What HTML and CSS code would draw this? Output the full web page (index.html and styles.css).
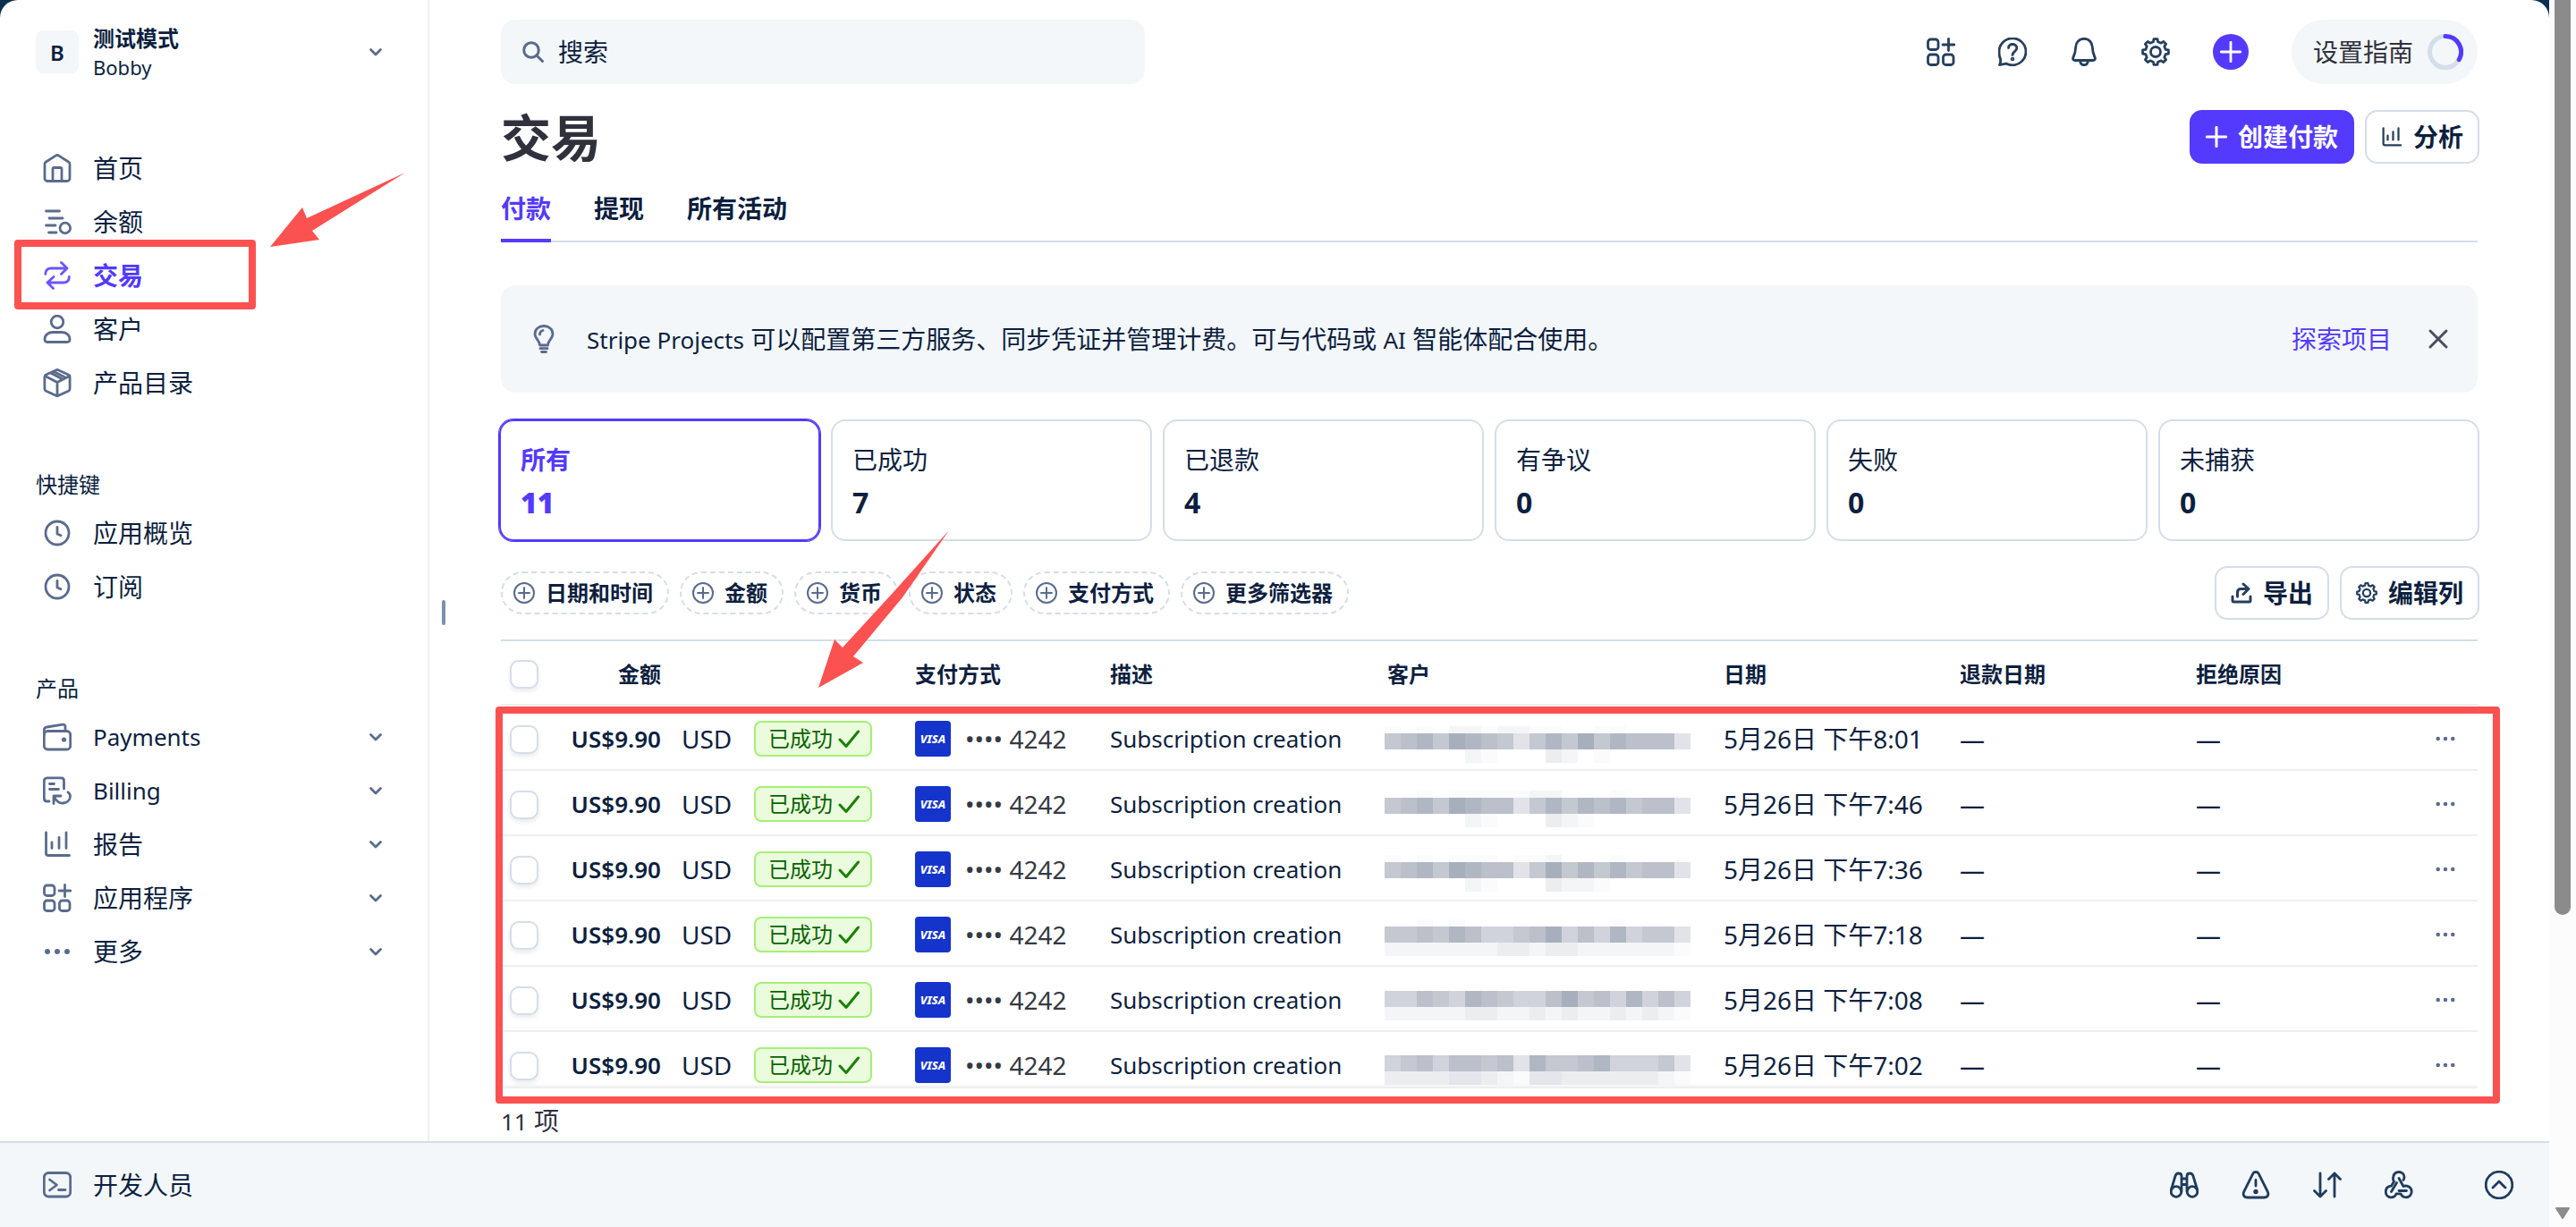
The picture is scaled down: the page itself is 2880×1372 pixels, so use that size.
FILE: index.html
```html
<!DOCTYPE html>
<html lang="zh-CN">
<head>
  <meta charset="UTF-8">
  <meta name="viewport" content="width=device-width, initial-scale=1">
  <title>交易</title>
  <link rel="stylesheet" href="styles.css">
</head>
<body>

  <!-- icon sprite -->
  <svg class="sprite" aria-hidden="true">
    <symbol id="i-home" viewBox="0 0 32 32"><path d="M2 11.4c0-1 .5-1.900 1.400-2.400l10.800-6.900c1.100-.7 2.500-.7 3.600 0l10.800 6.900c.9.5 1.400 1.400 1.400 2.400V27.500a3 3 0 0 1-3 3H5a3 3 0 0 1-3-3zM11 30.500V17a1.500 1.500 0 0 1 1.500-1.500h7A1.500 1.500 0 0 1 21 17v13.500"/></symbol>
    <symbol id="i-balance" viewBox="0 0 32 32"><path d="M3.500 4h15M7 12h15M3.500 20h10.500M6.500 28h8.500"/><circle cx="24.800" cy="23" r="5.800"/></symbol>
    <symbol id="i-swap" viewBox="0 0 32 32"><path d="M2.800 14.500C2.800 10.500 5 8 9 8h18M20.500 1.500L27 8l-6.500 6.500M29.300 17.500C29.300 21.500 27 24 23 24H5M12 17.500L5 24l6.500 6.500"/></symbol>
    <symbol id="i-user" viewBox="0 0 32 32"><circle cx="16" cy="8" r="6.800"/><path d="M2 27.500c0-5 4-8 9-8h10c5 0 9 3 9 8 0 2-1 3-3 3H5c-2 0-3-1-3-3z"/></symbol>
    <symbol id="i-box" viewBox="0 0 32 32"><path d="M14.500 1.900c1-.5 2-.5 3 0l11 5c1 .5 1.600 1.400 1.600 2.500v13.300c0 1-.6 2-1.600 2.500l-11 5c-1 .5-2 .5-3 0l-11-5c-1-.5-1.600-1.400-1.600-2.500V9.400c0-1 .6-2 1.600-2.500zM2.500 8.500L16 15.500l13.500-7M16 15.500v15M8.500 5L22 12M12 3.500l12 6"/></symbol>
    <symbol id="i-clock" viewBox="0 0 32 32"><circle cx="16" cy="16" r="13"/><path d="M16 9.500v7.500l4 1.800"/></symbol>
    <symbol id="i-wallet" viewBox="0 0 32 32"><rect x="1.300" y="9.500" width="29.400" height="20.500" rx="4"/><path d="M1.300 13V8.300c0-2 1-3 3-3.300L22 2.200c2-.3 3 .8 3 2.500v4.800"/><circle cx="23.500" cy="19" r="1.200"/></symbol>
    <symbol id="i-billing" viewBox="0 0 32 32"><path d="M7 28H4.500c-2 0-3.200-1.200-3.200-3.200V5.500c0-2 1.200-3.700 3.200-3.700h16c2 0 3 1.300 3 3.200v9M7.500 8.500h5M7.500 14.500h10M12 30.500V22h8M12.500 22.500c2 5 6 8 10 7.500 4.500-.5 8-3.500 8-7.500 0-2.200-1-3.700-2.500-4.700"/></symbol>
    <symbol id="i-chart" viewBox="0 0 32 32"><path d="M3.500 3v23c0 1.700.8 2.500 2.500 2.500h23.500M10 14v6.500M18 8.500v12M26 3v17.500"/></symbol>
    <symbol id="i-apps" viewBox="0 0 32 32"><rect x="1.500" y="2" width="11.500" height="11.500" rx="3"/><rect x="1.500" y="19" width="11.500" height="11.500" rx="3"/><rect x="18.500" y="19" width="11.500" height="11.500" rx="3"/><path d="M24.500 1.500v13M18 8h13"/></symbol>
    <symbol id="i-dots" viewBox="0 0 32 32"><g fill="currentColor" stroke="none"><circle cx="5" cy="16" r="3"/><circle cx="16" cy="16" r="3"/><circle cx="27" cy="16" r="3"/></g></symbol>
    <symbol id="i-terminal" viewBox="0 0 32 32"><rect x="1.300" y="2.500" width="29.400" height="26.500" rx="5"/><path d="M7.500 10l8 6-8 6M17.500 21.500h7.500"/></symbol>
    <symbol id="i-down" viewBox="0 0 16 16"><path d="M2.500 5.500L8 11l5.500-5.500"/></symbol>
    <symbol id="i-search" viewBox="0 0 24 24"><circle cx="10" cy="10" r="8.300"/><path d="M16 16l6.500 6.500"/></symbol>
    <symbol id="i-help" viewBox="0 0 32 32"><path d="M1.500 30.500c1.500-2.500 1.500-4 .9-7C.9 20.500 1 18.500 1 16a15 15 0 1 1 15 14.800c-3 0-5-.5-7.200-1.700-2.300.4-4.500 1.200-7.300 1.400z"/><path d="M11.500 11.500c0-2.500 2-4 4.500-4s4.800 1.700 4.800 4.200c0 4-4.800 3.800-4.800 7.800"/><circle cx="16" cy="24" r=".9"/></symbol>
    <symbol id="i-bell" viewBox="0 0 32 32"><path d="M16 1.300c-5.500 0-9 4-9.300 9.200-.2 5-.7 7.500-2.700 11.500-1 2 0 3.500 2 3.500h20c2 0 3-1.500 2-3.500-2-4-2.500-6.500-2.700-11.500-.3-5.200-3.800-9.200-9.300-9.200zM11.500 26c.5 3 2 4.700 4.500 4.700s4-1.700 4.500-4.700"/></symbol>
    <symbol id="i-gear" viewBox="0 0 32 32"><path d="M13.400 4.800L14 1.600h4l.6 3.200 3.500 1.400 2.700-1.800 2.800 2.800-1.800 2.700 1.400 3.500 3.200.6v4l-3.200.6-1.400 3.500 1.800 2.700-2.800 2.800-2.700-1.800-3.500 1.400-.6 3.200h-4l-.6-3.200-3.500-1.400-2.700 1.800-2.800-2.800 1.800-2.700-1.400-3.500-3.200-.6v-4l3.200-.6 1.400-3.500-1.800-2.700 2.800-2.800 2.700 1.800z"/><circle cx="16" cy="16" r="5.500"/></symbol>
    <symbol id="i-plus" viewBox="0 0 24 24"><path d="M12 1.300v21.400M1.300 12h21.400"/></symbol>
    <symbol id="i-bulb" viewBox="0 0 32 32"><path d="M11.500 23c0-2-.8-3.700-2.300-5.700C7 14.500 6 12.700 6 10.500 6 5 10.400 1.500 16 1.500S26 5 26 10.500c0 2.200-1 4-3.200 6.800-1.500 2-2.300 3.700-2.300 5.700zM12 26.700h8M13.500 30.500h5M11.500 11c0-2.500 1.500-4 3.500-4.500"/></symbol>
    <symbol id="i-close" viewBox="0 0 24 24"><path d="M3 3l18 18M21 3L3 21"/></symbol>
    <symbol id="i-add" viewBox="0 0 24 24"><circle cx="12" cy="12" r="11"/><path d="M12 6v12M6 12h12"/></symbol>
    <symbol id="i-export" viewBox="0 0 24 24"><path d="M2 16v4.500c0 1 .5 1.500 1.500 1.500h17c1 0 1.500-.5 1.500-1.500V16M7.500 16v-4.500C7.500 9 9 7.500 11.500 7.500H20M14 2l6 5.500-6 6"/></symbol>
    <symbol id="i-check" viewBox="0 0 24 24"><path d="M2 13l7 7.500L22.500 4"/></symbol>
    <symbol id="i-binoculars" viewBox="0 0 32 32"><circle cx="7" cy="23.500" r="5.800"/><circle cx="25" cy="23.500" r="5.800"/><path d="M1.500 21L6 6c.7-2 1.500-3 3.500-3s3.500 1 3.500 3v17M30.500 21L26 6c-.7-2-1.500-3-3.500-3S19 4 19 6v17M13 9h6M13 15.500h6"/></symbol>
    <symbol id="i-warning" viewBox="0 0 32 32"><path d="M12.800 3.300c1.500-2.400 4.900-2.400 6.400 0l10 20c1.700 3.700 0 6.700-4 6.700H6.800c-4 0-5.700-3-4-6.700zM16 10.500v6.500"/><circle cx="16" cy="23.500" r="1.300"/></symbol>
    <symbol id="i-updown" viewBox="0 0 32 32"><path d="M8 3v26M1.500 22.500L8 29l6.500-6.500M24 29V3M17.500 9.500L24 3l6.500 6.500"/></symbol>
    <symbol id="i-webhook" viewBox="0 0 32 32"><path d="M16 8.500l5 9c1.200-.5 2.500-.7 4-.3 3 .8 5.200 3.200 5.200 6.300 0 3.600-2.800 6.300-6.200 6.300-3 0-5-1.500-6-4h-5c-.7 2.500-3 4-6 4-3.200 0-5.700-2.700-5.700-6.200 0-3 1.700-5.500 4.700-6.200l1.500-.3 3-5.100c-1-1.500-1.300-3-.8-5C10.300 3.500 13 1.500 16 1.500s6 2.300 6 5.500c0 1.500-.3 2.500-1 3.500M7.500 23.500l6-10M16 22.500h8.500"/></symbol>
    <symbol id="i-circle-up" viewBox="0 0 32 32"><circle cx="16" cy="16" r="14.800"/><path d="M9 19l7-7 7 7"/></symbol>
  </svg>

  <div class="app">
    <div class="workspace">

      <aside class="sidebar">
        <button class="account" type="button">
          <span class="avatar">B</span>
          <span class="account-name"><strong>测试模式</strong><span class="user">Bobby</span></span>
          <svg class="icon chevron"><use href="#i-down"/></svg>
        </button>

        <nav>
          <ul class="nav-list">
            <li><a href="#"><svg class="icon"><use href="#i-home"/></svg>首页</a></li>
            <li><a href="#"><svg class="icon"><use href="#i-balance"/></svg>余额</a></li>
            <li class="active">
              <a href="#"><svg class="icon"><use href="#i-swap"/></svg>交易</a>
              <svg class="arrow arrow-nav" viewBox="0 0 152 86"><path d="M151 1L41 52 36 40 0 84 55 76 47 66z"/></svg>
            </li>
            <li><a href="#"><svg class="icon"><use href="#i-user"/></svg>客户</a></li>
            <li><a href="#"><svg class="icon"><use href="#i-box"/></svg>产品目录</a></li>
          </ul>

          <h2 class="nav-title">快捷键</h2>
          <ul class="nav-list">
            <li><a href="#"><svg class="icon"><use href="#i-clock"/></svg>应用概览</a></li>
            <li><a href="#"><svg class="icon"><use href="#i-clock"/></svg>订阅</a></li>
          </ul>

          <h2 class="nav-title">产品</h2>
          <ul class="nav-list">
            <li><a href="#" class="latin"><svg class="icon"><use href="#i-wallet"/></svg>Payments<svg class="icon chevron"><use href="#i-down"/></svg></a></li>
            <li><a href="#" class="latin"><svg class="icon"><use href="#i-billing"/></svg>Billing<svg class="icon chevron"><use href="#i-down"/></svg></a></li>
            <li><a href="#"><svg class="icon"><use href="#i-chart"/></svg>报告<svg class="icon chevron"><use href="#i-down"/></svg></a></li>
            <li><a href="#"><svg class="icon"><use href="#i-apps"/></svg>应用程序<svg class="icon chevron"><use href="#i-down"/></svg></a></li>
            <li><a href="#"><svg class="icon"><use href="#i-dots"/></svg>更多<svg class="icon chevron"><use href="#i-down"/></svg></a></li>
          </ul>
        </nav>
        <span class="resizer"></span>
      </aside>

      <main class="content">
        <header class="topbar">
          <label class="search">
            <svg class="icon"><use href="#i-search"/></svg>
            <input type="search" placeholder="搜索" aria-label="搜索">
          </label>
          <div class="tools">
            <button type="button" aria-label="应用"><svg class="icon"><use href="#i-apps"/></svg></button>
            <button type="button" aria-label="帮助"><svg class="icon"><use href="#i-help"/></svg></button>
            <button type="button" aria-label="通知"><svg class="icon"><use href="#i-bell"/></svg></button>
            <button type="button" aria-label="设置"><svg class="icon"><use href="#i-gear"/></svg></button>
            <button type="button" class="add" aria-label="新建"><svg class="icon"><use href="#i-plus"/></svg></button>
            <button type="button" class="guide">设置指南
              <svg class="ring" viewBox="0 0 40 40"><circle cx="20" cy="20" r="17.500"/><path d="M20 2.500A17.500 17.500 0 0 1 35.200 28.700"/></svg>
            </button>
          </div>
        </header>

        <div class="heading">
          <h1>交易</h1>
          <div class="actions">
            <button type="button" class="btn btn-primary"><svg class="icon"><use href="#i-plus"/></svg>创建付款</button>
            <button type="button" class="btn"><svg class="icon"><use href="#i-chart"/></svg>分析</button>
          </div>
        </div>

        <nav class="tabs">
          <a href="#" class="active">付款</a>
          <a href="#">提现</a>
          <a href="#">所有活动</a>
        </nav>

        <section class="banner">
          <svg class="icon"><use href="#i-bulb"/></svg>
          <p><span class="latin">Stripe Projects</span> 可以配置第三方服务、同步凭证并管理计费。可与代码或 <span class="latin">AI</span> 智能体配合使用。</p>
          <a href="#">探索项目</a>
          <button type="button" aria-label="关闭"><svg class="icon"><use href="#i-close"/></svg></button>
        </section>

        <section class="cards">
          <button type="button" class="card active"><span>所有</span><strong>11</strong></button>
          <button type="button" class="card"><span>已成功</span><strong>7</strong></button>
          <button type="button" class="card"><span>已退款</span><strong>4</strong></button>
          <button type="button" class="card"><span>有争议</span><strong>0</strong></button>
          <button type="button" class="card"><span>失败</span><strong>0</strong></button>
          <button type="button" class="card"><span>未捕获</span><strong>0</strong></button>
        </section>

        <div class="filters">
          <button type="button" class="pill"><svg class="icon"><use href="#i-add"/></svg>日期和时间</button>
          <button type="button" class="pill"><svg class="icon"><use href="#i-add"/></svg>金额</button>
          <button type="button" class="pill"><svg class="icon"><use href="#i-add"/></svg>货币</button>
          <button type="button" class="pill"><svg class="icon"><use href="#i-add"/></svg>状态</button>
          <button type="button" class="pill"><svg class="icon"><use href="#i-add"/></svg>支付方式</button>
          <button type="button" class="pill"><svg class="icon"><use href="#i-add"/></svg>更多筛选器</button>
          <div class="actions">
            <button type="button" class="btn"><svg class="icon"><use href="#i-export"/></svg>导出</button>
            <button type="button" class="btn"><svg class="icon"><use href="#i-gear"/></svg>编辑列</button>
          </div>
        </div>

        <div class="table-area">
          <div class="table-scroll">
            <table>
              <colgroup>
                <col class="c-check"><col class="c-amount"><col class="c-currency"><col class="c-status">
                <col class="c-method"><col class="c-desc"><col class="c-customer"><col class="c-date">
                <col class="c-date"><col class="c-reason"><col class="c-more">
              </colgroup>
              <thead>
                <tr>
                  <th class="check"><input type="checkbox" aria-label="全选"></th>
                  <th class="amount">金额</th>
                  <th></th>
                  <th></th>
                  <th>支付方式</th>
                  <th>描述</th>
                  <th>客户</th>
                  <th>日期</th>
                  <th>退款日期</th>
                  <th>拒绝原因</th>
                  <th></th>
                </tr>
              </thead>
              <tbody id="payments"></tbody>
            </table>
          </div>
          <div class="frame"></div>
          <svg class="arrow arrow-table" viewBox="0 0 148 178"><path d="M146 0L84 69 27 131 18 122 0 176 50 148 39 141 94 75z"/></svg>
        </div>
        <p class="count"><span class="latin">11</span> 项</p>
      </main>
    </div>

    <footer class="devbar">
      <a href="#"><svg class="icon"><use href="#i-terminal"/></svg>开发人员</a>
      <div class="dev-tools">
        <button type="button" aria-label="检查"><svg class="icon"><use href="#i-binoculars"/></svg></button>
        <button type="button" aria-label="错误"><svg class="icon"><use href="#i-warning"/></svg></button>
        <button type="button" aria-label="日志"><svg class="icon"><use href="#i-updown"/></svg></button>
        <button type="button" aria-label="Webhook"><svg class="icon"><use href="#i-webhook"/></svg></button>
        <button type="button" class="expand" aria-label="展开"><svg class="icon"><use href="#i-circle-up"/></svg></button>
      </div>
    </footer>
  </div>

  <div class="scrollbar"><span class="thumb"></span><svg class="scroll-down" viewBox="0 0 18 14"><path d="M2 1h14l-7 11z"/></svg></div>

  <script>
    // shade of every mosaic block: 0 = lightest, 5 = darkest
    const shades = ['#e1e3e8', '#d0d3dc', '#c4c8d1', '#bbc0ca', '#b1b7c2', '#a8afbc'];
    const faint = ['none', '#fafbfb', '#f4f5f6', '#ecedef', '#e4e6ec'];

    const payments = [
      { time: '8:01', top: '1010221221100110000', mid: '2342543202425243330', low: '0000021000320100000' },
      { time: '7:46', top: '0010111112200010000', mid: '2342543302424342330', low: '0000021000321000000' },
      { time: '7:36', top: '1010111011200010000', mid: '2342543302524242330', low: '0000021000322100000' },
      { time: '7:18', top: '0010100000000010000', mid: '2232431123513141220', low: '2222222332332222221' },
      { time: '7:08', top: '0000000000000000000', mid: '1132143211352314131', low: '2222233223232232321' },
      { time: '7:02', top: '0000000000000000000', mid: '1231332304223411120', low: '3333443214433333321' }
    ];

    function mosaic(p, row) {
      const y = 25 - row;
      let out = '';
      for (let i = 0; i < 19; i++) {
        const x = i * 18;
        out += `<rect x="${x}" y="${y - 8}" width="18" height="8" fill="${faint[p.top[i]]}"/>`;
        out += `<rect x="${x}" y="${y}" width="18" height="18" fill="${shades[p.mid[i]]}"/>`;
        out += `<rect x="${x}" y="${y + 18}" width="18" height="15" fill="${faint[p.low[i]]}"/>`;
      }
      return `<svg class="mosaic" viewBox="0 0 342 60">${out}</svg>`;
    }

    document.getElementById('payments').innerHTML = payments.map((p, row) => `
      <tr>
        <td class="check"><input type="checkbox" aria-label="选择"></td>
        <td class="amount latin">US$9.90</td>
        <td class="currency">USD</td>
        <td><span class="badge">已成功<svg class="icon"><use href="#i-check"/></svg></span></td>
        <td><span class="method"><span class="visa">VISA</span><span>•••• 4242</span></span></td>
        <td class="latin">Subscription creation</td>
        <td class="customer">${mosaic(p, row)}</td>
        <td>5月26日 下午${p.time}</td>
        <td>—</td>
        <td>—</td>
        <td class="more"><button type="button" aria-label="更多"><svg class="icon"><use href="#i-dots"/></svg></button></td>
      </tr>`).join('');
  </script>

</body>
</html>
```

FILE: styles.css
```css
*,
*::before,
*::after {
  margin: 0;
  padding: 0;
  box-sizing: border-box;
}

:root {
  --text: #0d1f3f;
  --icon: #5a6b8c;
  --dark-icon: #263f5e;
  --purple: #533afd;
  --line: #d4dee9;
  --line-light: #ebf0f5;
  --soft: #f3f7fa;
  --red: #fb5151;
}

body {
  display: flex;
  height: 100vh;
  overflow: hidden;
  background: #0a2f4f;
  color: var(--text);
  font-family: "Noto Sans", "Noto Sans CJK SC", sans-serif;
  font-size: 28px;
  line-height: 36px;
}

button {
  font: inherit;
  color: inherit;
  background: none;
  border: none;
  cursor: pointer;
}

a {
  color: inherit;
  text-decoration: none;
}

ul {
  list-style: none;
}

.latin {
  font-size: 26px;
}

.sprite {
  position: absolute;
  width: 0;
  height: 0;
}

.icon {
  width: 32px;
  height: 32px;
  flex: none;
  display: block;
  fill: none;
  stroke: currentColor;
  stroke-width: 2.8;
  stroke-linecap: round;
  stroke-linejoin: round;
}

.app {
  flex: 1;
  min-width: 0;
  display: flex;
  flex-direction: column;
  background: #fff;
  border-radius: 20px 20px 0 0;
}

.workspace {
  flex: 1;
  min-height: 0;
  display: flex;
}

/* Sidebar */
.sidebar {
  position: relative;
  width: 480px;
  flex: none;
  padding: 34px 50px 0 40px;
  border-right: 2px solid var(--line-light);
}

.account {
  display: flex;
  align-items: center;
  width: 100%;
  height: 48px;
  margin-bottom: 76px;
  text-align: left;
  font-size: 24px;
}

.avatar {
  width: 48px;
  height: 48px;
  margin-right: 16px;
  border-radius: 8px;
  background: var(--soft);
  font-weight: 600;
  line-height: 50px;
  text-align: center;
}

.account-name {
  display: flex;
  flex-direction: column;
  padding-top: 2px;
  line-height: 32px;
}

.user {
  font-size: 22px;
}

.chevron {
  width: 16px;
  height: 16px;
  margin-left: auto;
  color: var(--icon);
}

.nav-list li {
  position: relative;
}

.nav-list a {
  display: flex;
  align-items: center;
  height: 60px;
  padding-left: 8px;
}

.nav-list .icon:first-child {
  margin-right: 24px;
  color: var(--icon);
}

.nav-list .active a {
  color: var(--purple);
  font-weight: 700;
}

.nav-list .active .icon:first-child {
  color: #6b55fd;
}

.nav-list .active::after {
  content: "";
  position: absolute;
  left: -24px;
  top: -10px;
  width: 270px;
  height: 78px;
  border: 8px solid var(--red);
  border-radius: 4px;
}

.nav-title {
  margin: 66px 0 6px;
  font-size: 24px;
  font-weight: 400;
}

.resizer {
  position: absolute;
  right: -20px;
  top: 671px;
  width: 4px;
  height: 28px;
  border-radius: 2px;
  background: #7f8fae;
}

/* Red marks */
.arrow {
  position: absolute;
  fill: var(--red);
}

.arrow-nav {
  left: 262px;
  top: -86px;
  width: 152px;
  height: 86px;
}

.arrow-table {
  left: 355px;
  top: -122px;
  width: 148px;
  height: 178px;
}

.frame {
  position: absolute;
  inset: 75px -25px -17px -6px;
  border: 8px solid var(--red);
  border-radius: 4px;
  pointer-events: none;
}

/* Main column */
.content {
  flex: 1;
  min-width: 0;
  display: flex;
  flex-direction: column;
  padding: 22px 80px 0;
}

.topbar {
  display: flex;
  justify-content: space-between;
  height: 72px;
}

.search {
  display: flex;
  align-items: center;
  gap: 16px;
  width: 720px;
  padding: 0 24px;
  border-radius: 16px;
  background: var(--soft);
}

.search .icon {
  width: 24px;
  height: 24px;
  stroke-width: 3;
  color: var(--icon);
}

.search input {
  flex: 1;
  border: none;
  outline: none;
  background: none;
  font: inherit;
}

.search input::placeholder {
  color: var(--text);
}

.tools {
  display: flex;
  align-items: center;
  gap: 48px;
  color: var(--dark-icon);
}

.tools .add {
  width: 40px;
  height: 40px;
  padding: 8px;
  border-radius: 50%;
  background: var(--purple);
  color: #fff;
}

.tools .add .icon {
  width: 24px;
  height: 24px;
}

.tools .guide {
  display: flex;
  align-items: center;
  gap: 16px;
  height: 72px;
  padding: 0 16px 0 24px;
  border-radius: 36px;
  background: var(--soft);
  color: #30313d;
}

.ring {
  width: 40px;
  height: 40px;
  fill: none;
  stroke-width: 5;
  stroke-linecap: round;
}

.ring circle {
  stroke: #d4dee9;
}

.ring path {
  stroke: var(--purple);
}

.heading {
  display: flex;
  align-items: center;
  justify-content: space-between;
  height: 60px;
  margin-top: 29px;
}

h1 {
  color: #30313d;
  font-size: 56px;
  line-height: 60px;
}

.actions {
  display: flex;
  gap: 12px;
  margin-right: -2px;
}

.btn {
  display: flex;
  align-items: center;
  gap: 12px;
  height: 60px;
  padding: 0 16px;
  border: 2px solid var(--line);
  border-radius: 14px;
  font-weight: 700;
}

.btn .icon {
  width: 24px;
  height: 24px;
  stroke-width: 3;
  color: var(--dark-icon);
}

.btn-primary,
.btn-primary .icon {
  border-color: var(--purple);
  background: var(--purple);
  color: #fff;
}

.tabs {
  display: flex;
  gap: 48px;
  margin-top: 32px;
  border-bottom: 2px solid var(--line);
  font-weight: 700;
}

.tabs a {
  padding-bottom: 16px;
  margin-bottom: -2px;
  border-bottom: 4px solid transparent;
}

.tabs .active {
  color: var(--purple);
  border-color: var(--purple);
}

.banner {
  display: flex;
  align-items: center;
  height: 120px;
  flex: none;
  margin-top: 48px;
  padding: 0 32px;
  border-radius: 16px;
  background: var(--soft);
}

.banner > .icon {
  margin-right: 32px;
  color: var(--icon);
}

.banner a {
  margin-left: auto;
  margin-right: 40px;
  color: var(--purple);
}

.banner button .icon {
  width: 24px;
  height: 24px;
  stroke-width: 3;
  color: #474e5e;
}

.cards {
  display: grid;
  grid-template-columns: repeat(6, 1fr);
  gap: 12px;
  margin: 30px -2px 0;
}

.card {
  display: flex;
  flex-direction: column;
  justify-content: center;
  gap: 12px;
  height: 136px;
  padding: 2px 22px 0;
  border: 2px solid var(--line);
  border-radius: 16px;
  text-align: left;
}

.card strong {
  font-size: 32px;
}

.card.active {
  border-color: var(--purple);
  box-shadow: 0 0 0 1px var(--purple);
  color: var(--purple);
  font-weight: 700;
}

.filters {
  display: flex;
  align-items: center;
  gap: 12px;
  margin-top: 28px;
}

.filters .actions {
  margin-left: auto;
}

.pill {
  display: flex;
  align-items: center;
  gap: 12px;
  height: 48px;
  padding: 0 16px 0 12px;
  border: 2px dashed var(--line);
  border-radius: 24px;
  font-size: 24px;
  font-weight: 700;
}

.pill .icon {
  width: 24px;
  height: 24px;
  stroke-width: 2;
  color: var(--icon);
}

/* Payments table */
.table-area {
  position: relative;
  flex: 1;
  min-height: 0;
  margin-top: 22px;
}

.table-scroll {
  height: 100%;
  overflow: hidden;
  border-top: 2px solid var(--line);
}

.table-scroll::after {
  content: "";
  position: absolute;
  left: 0;
  right: 0;
  bottom: 0;
  height: 5px;
  background: linear-gradient(rgba(0, 0, 0, 0), rgba(0, 0, 0, 0.08));
}

table {
  width: 100%;
  table-layout: fixed;
  border-collapse: separate;
  border-spacing: 0;
}

.c-check { width: 60px; }
.c-amount { width: 120px; }
.c-currency { width: 102px; }
.c-status { width: 180px; }
.c-method { width: 218px; }
.c-desc { width: 310px; }
.c-customer { width: 376px; }
.c-date { width: 264px; }
.c-reason { width: 246px; }
.c-more { width: 70px; }

th,
td {
  height: 73px;
  padding-top: 2px;
  padding-left: 1px;
  border-bottom: 2px solid var(--line-light);
  text-align: left;
  vertical-align: middle;
  white-space: nowrap;
}

th {
  height: 72px;
  padding-top: 4px;
  font-size: 24px;
}

.check {
  padding-top: 4px;
  padding-left: 10px;
}

.check input {
  display: block;
  appearance: none;
  width: 32px;
  height: 32px;
  border: 2px solid var(--line);
  border-radius: 10px;
  background: #fff;
  box-shadow: 0 3px 5px rgba(40, 50, 80, 0.1);
}

.amount {
  padding-right: 1px;
  text-align: right;
}

td.amount {
  font-weight: 600;
}

.currency {
  padding-left: 22px;
}

.badge {
  display: inline-flex;
  align-items: center;
  gap: 6px;
  height: 40px;
  padding: 0 12px 0 14px;
  border: 2px solid #a6f075;
  border-radius: 8px;
  background: #eafcdd;
  color: #086300;
  font-size: 24px;
  vertical-align: middle;
}

.badge .icon {
  width: 24px;
  height: 24px;
  stroke-width: 3;
  color: #1a8000;
}

.method {
  display: flex;
  align-items: center;
  gap: 16px;
  color: #353a44;
}

.visa {
  width: 40px;
  height: 40px;
  flex: none;
  border-radius: 4px;
  background: #1434cb;
  color: #fff;
  font-size: 13px;
  font-style: italic;
  font-weight: 800;
  line-height: 40px;
  text-align: center;
}

.customer {
  padding: 0;
}

.mosaic {
  display: block;
  width: 342px;
  height: 60px;
  margin-left: -2px;
  shape-rendering: crispEdges;
}

.more {
  padding: 4px 0 0;
}

.more .icon {
  width: 24px;
  height: 24px;
  margin-left: 22px;
  color: var(--icon);
}

.count {
  height: 59px;
  line-height: 72px;
  color: #30313d;
}

/* Developer bar */
.devbar {
  display: flex;
  align-items: center;
  justify-content: space-between;
  height: 96px;
  flex: none;
  padding: 0 40px 0 48px;
  border-top: 2px solid var(--line);
  background: var(--soft);
}

.devbar a {
  display: flex;
  align-items: center;
  gap: 24px;
}

.devbar a .icon {
  color: var(--icon);
}

.dev-tools {
  display: flex;
  gap: 48px;
  color: #1f3c5c;
}

.dev-tools .expand {
  margin-left: 32px;
}

.scrollbar {
  display: flex;
  flex-direction: column;
  align-items: center;
  justify-content: space-between;
  width: 30px;
  flex: none;
  padding-bottom: 8px;
  background: #fcfcfc;
}

.thumb {
  width: 18px;
  height: 75%;
  border-radius: 0 0 9px 9px;
  background: #8b8b8b;
}

.scroll-down {
  width: 18px;
  height: 14px;
  fill: #8b8b8b;
  stroke: #8b8b8b;
  stroke-width: 2;
  stroke-linejoin: round;
}
```
